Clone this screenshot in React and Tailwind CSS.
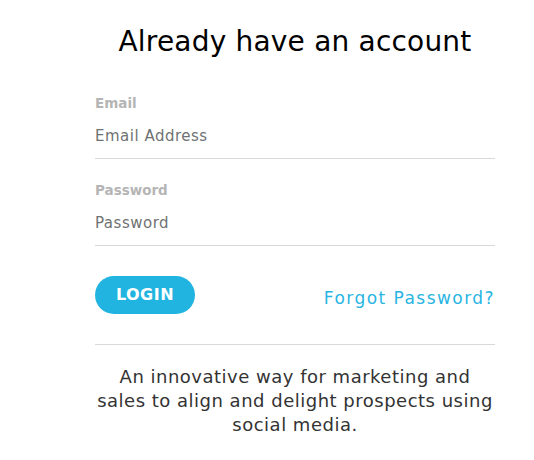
import React from 'react';

const App = () => {
    return (
        <div className="min-h-[460px] w-full bg-white" style={{ fontFamily: '"DejaVu Sans", "Open Sans", sans-serif' }}>
            <div className="ml-[95px] w-[400px] pt-[22px]">
                <h1 className="text-center text-[28px] leading-[40px] font-normal tracking-[0.2px] text-black">Already have an account</h1>

                <div className="mt-[31px]">
                    <label className="block text-[13.5px] leading-[20px] font-bold text-[#b5b5b5]">Email</label>
                    <div className="mt-[11px] border-b border-[#d9d9d9] pb-[10px]">
                        <input
                            type="email"
                            placeholder="Email Address"
                            className="w-full bg-transparent text-[15px] leading-[20px] tracking-[0.5px] text-[#555] outline-none placeholder:text-[#6f7272]"
                        />
                    </div>
                </div>

                <div className="mt-[21px]">
                    <label className="block text-[13.5px] leading-[20px] font-bold text-[#b5b5b5]">Password</label>
                    <div className="mt-[11px] border-b border-[#d9d9d9] pb-[10px]">
                        <input
                            type="password"
                            placeholder="Password"
                            className="w-full bg-transparent text-[15px] leading-[20px] tracking-[0.5px] text-[#555] outline-none placeholder:text-[#6f7272]"
                        />
                    </div>
                </div>

                <div className="mt-[30px] flex items-center justify-between">
                    <button className="h-[38px] w-[100px] rounded-full bg-[#21b4e0] text-[16px] font-bold tracking-[0.5px] text-white">
                        LOGIN
                    </button>
                    <a href="#" className="mt-[7px] text-[17px] tracking-[1.45px] text-[#29b5e2]">Forgot Password?</a>
                </div>

                <div className="mt-[30px] border-t border-[#d9d9d9] pt-[20px]">
                    <p className="mx-auto w-[400px] text-center text-[18px] leading-[24px] tracking-[0.5px] text-[#333]">
                        An innovative way for marketing and<br />sales to align and delight prospects using<br />social media.
                    </p>
                </div>
            </div>
        </div>
    );
};

export default App;
